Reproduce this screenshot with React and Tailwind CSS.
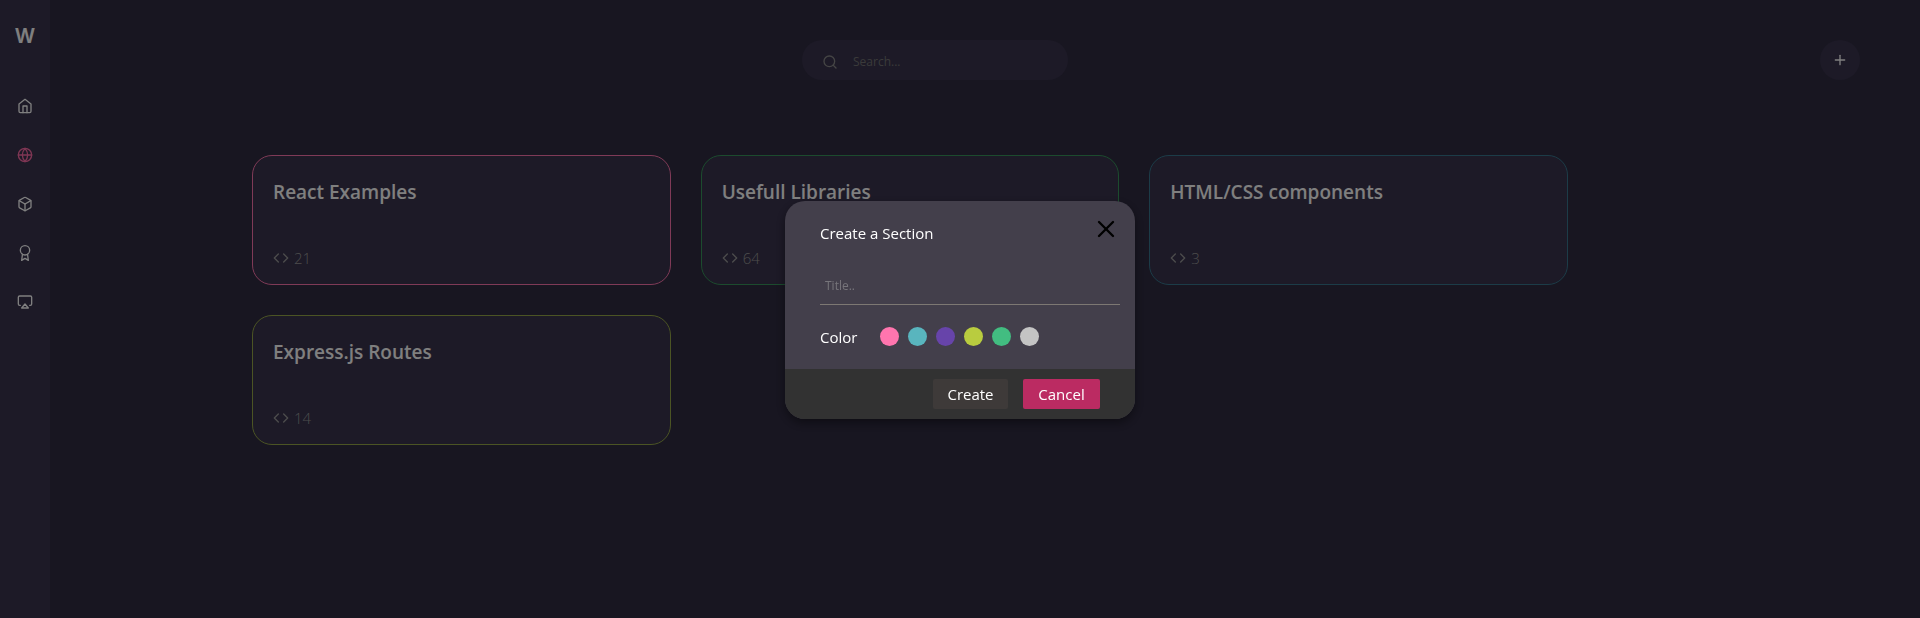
import { FiHome, FiGlobe, FiBox, FiAward, FiAirplay, FiSearch, FiPlus, FiCode, FiX } from "react-icons/fi";

const navItems = [
  { label: "Home", Icon: FiHome, tone: "text-white" },
  { label: "Explore", Icon: FiGlobe, tone: "text-[#ff6ca8]" },
  { label: "Packages", Icon: FiBox, tone: "text-white" },
  { label: "Awards", Icon: FiAward, tone: "text-white" },
  { label: "Screens", Icon: FiAirplay, tone: "text-white" },
];

const sections = [
  { title: "React Examples", count: 21, border: "border-[#ff75ae]" },
  { title: "Usefull Libraries", count: 64, border: "border-[#38965c]" },
  { title: "HTML/CSS components", count: 3, border: "border-[#387890]" },
  { title: "Express.js Routes", count: 14, border: "border-[#96a848]" },
];

const colors = [
  { name: "Pink", fill: "bg-[#ff75ae]" },
  { name: "Teal", fill: "bg-[#59b5be]" },
  { name: "Purple", fill: "bg-[#6744aa]" },
  { name: "Lime", fill: "bg-[#b9cc3f]" },
  { name: "Green", fill: "bg-[#42bd81]" },
  { name: "Silver", fill: "bg-[#c4c4c4]" },
];

function Sidebar() {
  return (
    <aside className="flex w-[50px] shrink-0 flex-col items-center bg-[#3a344e] pt-5">
      <div className="font-[Inter] text-[20px] leading-8 font-semibold text-white">W</div>
      <nav className="mt-[37px] flex flex-col gap-[15px]">
        {navItems.map(({ label, Icon, tone }) => (
          <a key={label} href="#" aria-label={label} className={`flex size-[34px] items-center justify-center ${tone}`}>
            <Icon size={16} />
          </a>
        ))}
      </nav>
    </aside>
  );
}

function SectionCard({ title, count, border }) {
  return (
    <article className={`flex h-[130px] flex-col justify-between rounded-[20px] border bg-[#3a344e] px-5 pt-5 pb-[14px] ${border}`}>
      <h2 className="text-[19px] leading-8 font-semibold text-white">{title}</h2>
      <p className="flex items-center gap-[5px] text-[15px] leading-6 font-light text-[#999999]">
        <FiCode size={16} />
        {count}
      </p>
    </article>
  );
}

function CreateDialog() {
  return (
    <form
      role="dialog"
      aria-label="Create a Section"
      className="w-[350px] overflow-hidden rounded-[20px] bg-[#433f4b] text-[15px] font-medium text-white shadow-[0_4px_10px_rgba(0,0,0,0.4)]"
    >
      <div className="h-[168px] pr-[15px] pl-[35px]">
        <div className="flex items-start justify-between pt-[14px]">
          <h1 className="mt-[6px] leading-6">Create a Section</h1>
          <button type="button" aria-label="Close" className="text-black">
            <FiX size={28} />
          </button>
        </div>
        <input
          type="text"
          aria-label="Title"
          placeholder="Title.."
          className="mt-[23px] block h-[37px] w-full border-b border-[#7d7873] bg-transparent px-[5px] pb-[2px] text-[12px] font-normal outline-none placeholder:text-[#77757b]"
        />
        <fieldset className="mt-5 flex h-6 items-center">
          <legend className="float-left w-[60px] leading-6">Color</legend>
          <div className="flex gap-[9px] pb-[2px]">
            {colors.map(({ name, fill }) => (
              <input
                key={name}
                type="radio"
                name="color"
                aria-label={name}
                className={`size-[19px] appearance-none rounded-full ${fill}`}
              />
            ))}
          </div>
        </fieldset>
      </div>
      <div className="flex h-[50px] items-center justify-end gap-[15px] bg-[#323232] pr-[35px]">
        <button type="submit" className="h-[30px] w-[75px] rounded-[2px] bg-[#3e3a39]">Create</button>
        <button type="button" className="h-[30px] w-[77px] rounded-[2px] bg-[#bb2b62]">Cancel</button>
      </div>
    </form>
  );
}

export default function App() {
  return (
    <div className="flex min-h-screen bg-[#302c42] font-['Open_Sans','Noto_Sans',sans-serif]">
      <Sidebar />
      <div className="flex-1">
        <header className="flex items-center pt-10 pr-[60px]">
          <div className="flex flex-1 justify-center">
            <label className="flex h-10 w-[266px] items-center gap-[15px] rounded-[20px] bg-[#3a344e] px-5 pt-1 text-[#8a8a8a]">
              <FiSearch size={16} />
              <input
                type="search"
                aria-label="Search"
                placeholder="Search..."
                className="min-w-0 flex-1 bg-transparent text-[12px] outline-none placeholder:text-[#757575]"
              />
            </label>
          </div>
          <button aria-label="Add section" className="flex size-10 items-center justify-center rounded-full bg-[#3a344e] text-white">
            <FiPlus size={16} />
          </button>
        </header>
        <main className="pt-[75px] pr-[150px]">
          <div className="mx-auto grid max-w-[1316px] grid-cols-3 gap-[30px]">
            {sections.map((section) => (
              <SectionCard key={section.title} {...section} />
            ))}
          </div>
        </main>
      </div>
      <div className="fixed inset-0 flex items-center justify-center bg-black/50 pt-[2px]">
        <CreateDialog />
      </div>
    </div>
  );
}
